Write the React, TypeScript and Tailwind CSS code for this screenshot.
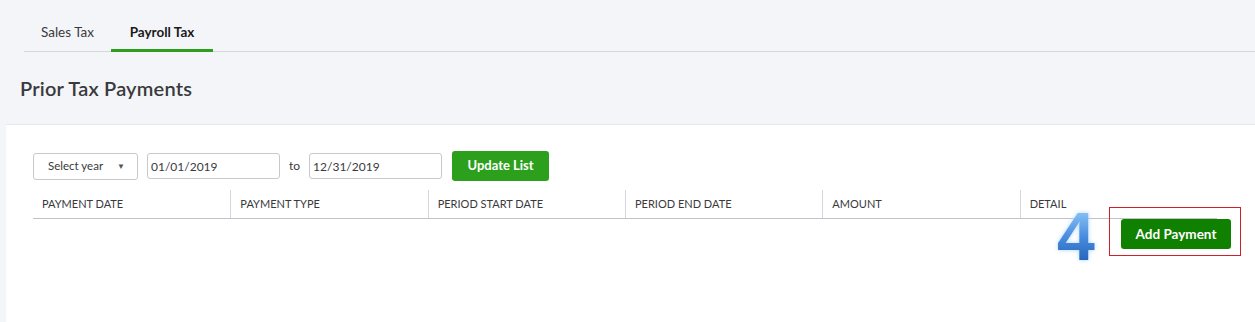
import { useState } from "react";

const columns = [
  "PAYMENT DATE",
  "PAYMENT TYPE",
  "PERIOD START DATE",
  "PERIOD END DATE",
  "AMOUNT",
  "DETAIL",
];

export default function App() {
  const [tab, setTab] = useState("payroll");
  const [from, setFrom] = useState("01/01/2019");
  const [to, setTo] = useState("12/31/2019");

  const tabClass = (active: boolean) =>
    `h-10 -mb-px flex items-center justify-center pt-[3px] text-[13.5px] border-b-[3px] ${
      active ? "font-bold text-[#1a1a1a] border-[#2ca01c]" : "text-[#393a3d] border-transparent"
    }`;

  return (
    <div className="relative w-[1255px] h-[322px] overflow-hidden bg-[#f4f5f8] font-['Lato','Open_Sans',sans-serif] text-[#393a3d]">
      {/* Tabs */}
      <div className="ml-6 mt-3 flex border-b border-[#d4d7dc]">
        <button onClick={() => setTab("sales")} className={`w-[87px] ${tabClass(tab === "sales")}`}>
          Sales Tax
        </button>
        <button onClick={() => setTab("payroll")} className={`w-[102px] ${tabClass(tab === "payroll")}`}>
          Payroll Tax
        </button>
      </div>

      {/* Title */}
      <div className="h-[72px] flex items-center pl-5">
        <h1 className="text-[20px] font-semibold text-[#393a3d] tracking-[0.2px]">Prior Tax Payments</h1>
      </div>

      {/* Panel */}
      <div className="ml-[6px] h-[200px] bg-white border-t border-[#e6e8eb] pl-[27px] pt-[26px]">
        <div className="flex items-center h-[30px]">
          <div className="w-[105px] h-[27px] border border-[#c6c9ce] rounded-[3px] flex items-center justify-between pl-[14px] pr-[12px] text-[11.5px] text-[#393a3d]">
            <span>Select year</span>
            <span className="text-[8px] text-[#555]">▼</span>
          </div>
          <input
            value={from}
            onChange={(e) => setFrom(e.target.value)}
            className="ml-[9px] w-[133px] h-[26px] border border-[#c6c9ce] rounded-[3px] px-[3px] text-[12px] text-[#393a3d] outline-none"
          />
          <span className="ml-[9px] text-[12px] text-[#393a3d]">to</span>
          <input
            value={to}
            onChange={(e) => setTo(e.target.value)}
            className="ml-[9px] w-[133px] h-[26px] border border-[#c6c9ce] rounded-[3px] px-[3px] text-[12px] text-[#393a3d] outline-none"
          />
          <button className="ml-[10px] w-[97px] h-[30px] rounded-[3px] bg-[#2ca01c] text-white text-[13px] font-bold">
            Update List
          </button>
        </div>

        {/* Table header */}
        <div className="mt-[9px] w-[1184px] grid grid-cols-6 border-b border-[#bfc2c7]">
          {columns.map((c, i) => (
            <div
              key={c}
              className={`h-[28px] flex items-center pl-[9px] text-[11px] text-[#393a3d] ${i > 0 ? "border-l border-[#d4d7dc]" : ""}`}
            >
              {c}
            </div>
          ))}
        </div>

        <div className="flex justify-end pr-[24px]">
          <button className="w-[110px] h-[30px] rounded-[3px] bg-[#108000] text-white text-[13.5px] font-bold">
            Add Payment
          </button>
        </div>
      </div>

      {/* Annotation */}
      <div className="absolute left-[1109px] top-[207px] w-[132px] h-[49px] border border-[#d0202a]" />
      <div className="absolute left-[1057px] top-[210px] text-[68px] leading-[52px] font-bold font-['Liberation_Sans',sans-serif] bg-gradient-to-b from-[#8cc4f5] via-[#4a8ee0] to-[#2563b8] bg-clip-text text-transparent drop-shadow-[0_0_2px_#a9d4ff]">
        4
      </div>
    </div>
  );
}
